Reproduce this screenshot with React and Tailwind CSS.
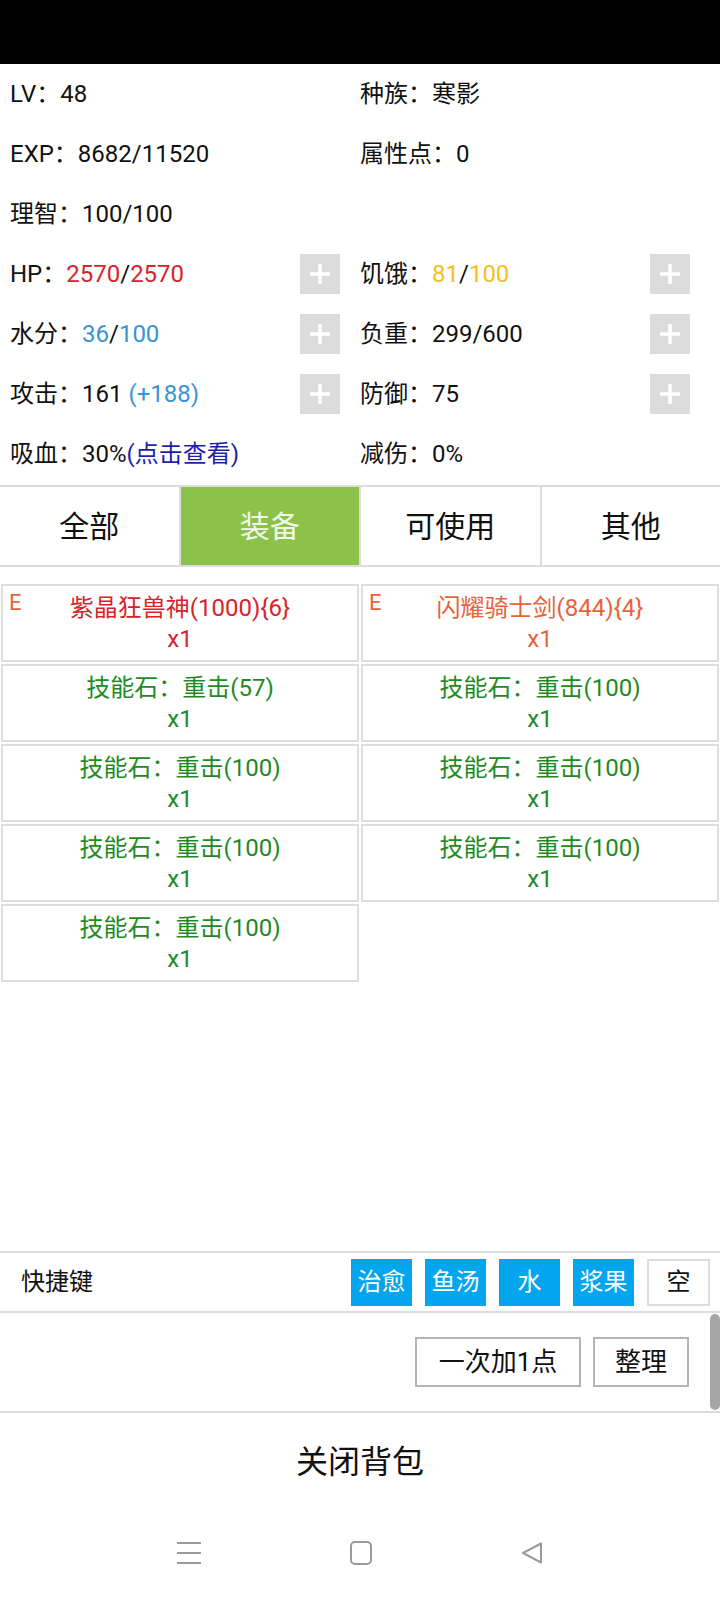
import React from "react";

const font = { fontFamily: "Roboto, 'Noto Sans CJK SC', sans-serif" };

function PlusBtn({ className }) {
  return (
    <div className={"w-10 h-10 bg-[#dcdcdc] flex items-center justify-center " + className}>
      <svg width="24" height="24" viewBox="0 0 24 24">
        <path d="M12 2v20M2 12h20" stroke="#fff" strokeWidth="3.5" />
      </svg>
    </div>
  );
}

// 属性行
const rows = [
  {
    left: <>LV：48</>,
    right: <>种族：寒影</>,
  },
  {
    left: <>EXP：8682/11520</>,
    right: <>属性点：0</>,
  },
  {
    left: <>理智：100/100</>,
    right: null,
  },
  {
    left: (
      <>
        HP：<span className="text-[#d9232b]">2570</span>/<span className="text-[#d9232b]">2570</span>
      </>
    ),
    right: (
      <>
        饥饿：<span className="text-[#f3c01c]">81</span>/<span className="text-[#f3c01c]">100</span>
      </>
    ),
    plus: true,
  },
  {
    left: (
      <>
        水分：<span className="text-[#3a93d6]">36</span>/<span className="text-[#3a93d6]">100</span>
      </>
    ),
    right: <>负重：299/600</>,
    plus: true,
  },
  {
    left: (
      <>
        攻击：161 <span className="text-[#3a93d6]">(+188)</span>
      </>
    ),
    right: <>防御：75</>,
    plus: true,
  },
  {
    left: (
      <>
        吸血：30%<span className="text-[#1e1ea8]">(点击查看)</span>
      </>
    ),
    right: <>减伤：0%</>,
  },
];

const tabs = ["全部", "装备", "可使用", "其他"];

const items = [
  { name: "紫晶狂兽神(1000){6}", color: "text-[#d9232b]", equip: true },
  { name: "闪耀骑士剑(844){4}", color: "text-[#e8633a]", equip: true },
  { name: "技能石：重击(57)", color: "text-[#1f8a24]" },
  { name: "技能石：重击(100)", color: "text-[#1f8a24]" },
  { name: "技能石：重击(100)", color: "text-[#1f8a24]" },
  { name: "技能石：重击(100)", color: "text-[#1f8a24]" },
  { name: "技能石：重击(100)", color: "text-[#1f8a24]" },
  { name: "技能石：重击(100)", color: "text-[#1f8a24]" },
  { name: "技能石：重击(100)", color: "text-[#1f8a24]" },
];

const quick = ["治愈", "鱼汤", "水", "浆果"];

export default function App() {
  return (
    <div className="w-[720px] h-[1600px] bg-white flex flex-col text-[#111]" style={font}>
      <div className="h-16 bg-black" />

      {/* 属性 */}
      <div className="flex flex-col text-[24px]">
        {rows.map((r, i) => (
          <div key={i} className="h-[60px] flex items-center">
            <div className="w-[360px] flex items-center pl-[10px] pr-5">
              <span>{r.left}</span>
              {r.plus && <PlusBtn className="ml-auto" />}
            </div>
            <div className="w-[360px] flex items-center pr-[30px]">
              <span>{r.right}</span>
              {r.plus && <PlusBtn className="ml-auto" />}
            </div>
          </div>
        ))}
      </div>

      {/* 标签 */}
      <div className="mt-px h-[82px] flex border-y-2 border-[#dddddd] text-[30px]">
        {tabs.map((t, i) => (
          <div
            key={t}
            className={
              "flex-1 flex items-center justify-center " +
              (i > 0 ? "border-l-2 border-[#dddddd] " : "") +
              (i === 1 ? "bg-[#8bc34a] text-[#f2f8ea]" : "")
            }
          >
            {t}
          </div>
        ))}
      </div>

      {/* 物品 */}
      <div className="h-[684px] pt-[16px]">
        <div className="grid grid-cols-2">
          {items.map((it, i) => (
            <div
              key={i}
              className={"relative m-px h-[78px] border-2 border-[#dddddd] flex flex-col items-center justify-center pt-[2px] text-[24px] leading-[31px] " + it.color}
            >
              {it.equip && <span className="absolute left-[6px] top-[1px] text-[22px] text-[#e8633a]">E</span>}
              <div>{it.name}</div>
              <div>x1</div>
            </div>
          ))}
        </div>
      </div>

      {/* 快捷键 */}
      <div className="h-[62px] border-y-2 border-[#dddddd] flex items-center pl-[21px] pr-[10px] text-[24px]">
        <span>快捷键</span>
        <div className="ml-auto flex gap-[13px]">
          {quick.map((q) => (
            <div key={q} className="w-[61px] h-[47px] bg-[#03a5ee] text-white flex items-center justify-center">
              {q}
            </div>
          ))}
          <div className="w-[63px] h-[47px] border-2 border-[#dddddd] flex items-center justify-center">空</div>
        </div>
      </div>

      <div className="relative h-[100px] border-b-2 border-[#dddddd] flex items-center justify-end gap-3 pr-[31px] text-[26px]">
        <div className="w-[166px] h-[50px] border-2 border-[#b4b4b4] flex items-center justify-center">一次加1点</div>
        <div className="w-[96px] h-[50px] border-2 border-[#b4b4b4] flex items-center justify-center">整理</div>
        <div className="absolute right-0 top-[1px] w-[10px] h-[96px] rounded-full bg-[#a6a6a6]" />
      </div>

      <div className="h-[98px] flex items-center justify-center text-[32px]">关闭背包</div>

      {/* 导航栏 */}
      <div className="flex-1 flex items-center justify-center gap-[148px] pb-[6px]">
        <svg width="26" height="24" viewBox="0 0 26 24">
          <path d="M1 2h24M1 12h24M1 22h24" stroke="#9a9a9a" strokeWidth="2" />
        </svg>
        <svg width="22" height="24" viewBox="0 0 22 24">
          <rect x="1" y="1" width="20" height="22" rx="4" fill="none" stroke="#9a9a9a" strokeWidth="2" />
        </svg>
        <svg width="24" height="24" viewBox="0 0 24 24">
          <path d="M21 2.5 L3 12 L21 21.5 Z" fill="none" stroke="#9a9a9a" strokeWidth="2" strokeLinejoin="round" />
        </svg>
      </div>
    </div>
  );
}
